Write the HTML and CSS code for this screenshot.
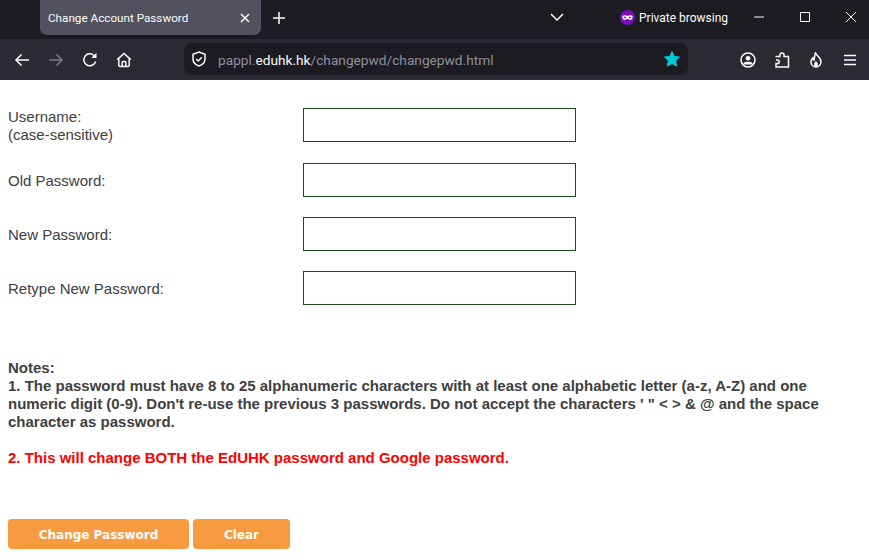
FILE: index.html
```html
<!DOCTYPE html>
<html lang="en">
<head>
  <meta charset="UTF-8">
  <title>Change Account Password</title>
  <link rel="stylesheet" href="styles.css">
</head>
<body>

<div class="tabbar">
  <div class="tab">
    <span class="tab-title">Change Account Password</span>
    <svg class="tab-close" width="10" height="10" viewBox="0 0 10 10"><path d="M1 1l8 8M9 1l-8 8" /></svg>
  </div>
  <svg class="new-tab" width="14" height="14" viewBox="0 0 14 14"><path d="M7 1v12M1 7h12" /></svg>
  <svg class="tab-list" width="14" height="8" viewBox="0 0 14 8"><path d="M1 1l6 6 6-6" /></svg>
  <div class="private">
    <svg width="15" height="15" viewBox="0 0 16 16"><circle cx="8" cy="8" r="8" /><path d="M2.600 6.400c1.600-1 3.600-.9 5.400.1 1.800-1 3.800-1.100 5.400-.1.300 2-.4 4-2.300 4.200-1.300.1-2.200-1.200-3.100-1.200s-1.800 1.300-3.100 1.200C3 10.400 2.300 8.400 2.600 6.400z" /><circle cx="5.400" cy="8" r="1.100" /><circle cx="10.600" cy="8" r="1.100" /></svg>
    <span>Private browsing</span>
  </div>
  <div class="win-buttons">
    <svg width="10" height="10" viewBox="0 0 10 10"><path d="M0 5h10" /></svg>
    <svg width="10" height="10" viewBox="0 0 10 10"><path d="M.5.500h9v9h-9z" /></svg>
    <svg width="10" height="10" viewBox="0 0 10 10"><path d="M0 0l10 10M10 0L0 10" /></svg>
  </div>
</div>

<div class="toolbar">
  <svg class="tool" width="16" height="16" viewBox="0 0 16 16"><path d="M15 8H2M7.500 2.500L2 8l5.500 5.500" /></svg>
  <svg class="tool tool-off" width="16" height="16" viewBox="0 0 16 16"><path d="M1 8h13M8.500 2.500L14 8l-5.500 5.500" /></svg>
  <svg class="tool" width="16" height="16" viewBox="0 0 16 16"><path d="M13.600 9.500A6 6 0 1 1 12 3.500" /><path class="solid" d="M14.500.8v5.200H9.300z" /></svg>
  <svg class="tool" width="16" height="16" viewBox="0 0 16 16"><path d="M1.200 7.600L8 1.500l6.800 6.100M2.800 6.500v6.800c0 .7.500 1.200 1.200 1.200h8c.7 0 1.200-.5 1.200-1.200V6.500M6.200 14.500V10.500c0-.5.400-.9.900-.9h1.800c.5 0 .9.400.9.900v4" /></svg>
  <div class="urlbar">
    <svg class="tool shield" width="16" height="16" viewBox="0 0 16 16"><path d="M8 1l6 2.200V8c0 3.400-2.600 5.800-6 7-3.400-1.200-6-3.600-6-7V3.200z" /><path d="M5.200 8l2 2 3.600-3.800" /></svg>
    <span class="url"><span class="url-dim">pappl.</span>eduhk.hk<span class="url-dim">/changepwd/changepwd.html</span></span>
    <svg class="star" width="16" height="16" viewBox="0 0 16 16"><path d="M8 .500l2.300 4.900 5.200.7-3.800 3.700.9 5.300L8 12.500l-4.600 2.600.9-5.300L.5 6.100l5.200-.7z" /></svg>
  </div>
  <div class="tools-right">
    <svg class="tool" width="16" height="16" viewBox="0 0 16 16"><circle cx="8" cy="8" r="7" /><circle class="solid" cx="8" cy="6.300" r="2.300" /><path class="solid" d="M3.500 11.200c1-1.100 2.600-1.500 4.500-1.500s3.500.4 4.500 1.500v1.300h-9z" /></svg>
    <svg class="tool" width="16" height="16" viewBox="0 0 16 16"><path d="M1.500 4.500H6V3a2 2 0 0 1 4 0v1.500h4.500V15H2v-3.500h1.500a1.800 1.800 0 0 0 0-3.600H2" /></svg>
    <svg class="tool" width="16" height="16" viewBox="0 0 16 16"><path d="M7.500.8c.5 2.500 5.500 4.500 5.500 9 0 3-2.200 5.200-5 5.200s-5-2.200-5-5c0-1.800.8-3 1.800-4 .1 1 .5 1.700 1.200 2.200C6.500 6 6.700 3 7.500.8z" /><path class="solid" d="M8 9c.3 1 2 1.800 2 3.400C10 13.500 9.100 14.500 8 14.500S6 13.500 6 12.400C6 11 7.700 10.200 8 9z" /></svg>
    <svg class="tool" width="16" height="16" viewBox="0 0 16 16"><path d="M2 3.500h12M2 8h12M2 12.500h12" /></svg>
  </div>
</div>

<form class="page">
  <div class="fields">
    <label class="field field-tall">
      <span>Username:<br>(case-sensitive)</span>
      <input type="text">
    </label>
    <label class="field">
      <span>Old Password:</span>
      <input type="password">
    </label>
    <label class="field">
      <span>New Password:</span>
      <input type="password">
    </label>
    <label class="field">
      <span>Retype New Password:</span>
      <input type="password">
    </label>
  </div>

  <div class="notes">
    <p>Notes:<br>1. The password must have 8 to 25 alphanumeric characters with at least one alphabetic letter (a-z, A-Z) and one numeric digit (0-9). Don't re-use the previous 3 passwords. Do not accept the characters ' " &lt; &gt; &amp; @ and the space character as password.</p>
    <p class="warning">2. This will change BOTH the EdUHK password and Google password.</p>
  </div>

  <div class="actions">
    <button type="button" class="btn btn-change">Change Password</button>
    <button type="reset" class="btn btn-clear">Clear</button>
  </div>
</form>

</body>
</html>
```

FILE: styles.css
```css
html, body { margin: 0; padding: 0; background: white; }
body { height: 560px; overflow: hidden; font-family: "Liberation Sans", Arial, sans-serif; font-size: 15px; color: #404040; }
svg path, svg circle { fill: none; stroke: #fbfbfe; stroke-width: 1.5; }
svg .solid { fill: #fbfbfe; stroke: none; }

.tabbar { display: flex; align-items: flex-start; height: 39px; background-color: #1c1b22; color: #fbfbfe; font-family: Roboto, "Noto Sans", sans-serif; font-size: 12px; white-space: nowrap; }
.tab { flex: none; display: flex; align-items: center; justify-content: space-between; box-sizing: border-box; width: 221px; height: 35px; margin-left: 40px; padding: 0 11px 0 8px; background-color: #52525e; border-radius: 0 0 7px 7px; }
.tab-title { font-size: 11.7px; }
.tab-close { flex: none; }
.new-tab { flex: none; margin: 11px 0 0 11px; }
.tab-list { flex: none; margin: 13px 0 0 264px; }
.private { flex: none; display: flex; align-items: center; gap: 4px; margin: 10px 0 0 56px; }
.private svg circle { fill: #7a0fb8; stroke: none; }
.private svg path { fill: #fff; stroke: none; }
.win-buttons { flex: none; display: flex; gap: 36px; margin: 12px 0 0 26px; }
.win-buttons path { stroke-width: 1; }

.toolbar { display: flex; align-items: center; height: 41px; background-color: #2b2a33; padding-left: 14px; }
.tool { flex: none; margin-right: 18px; }
.tool-off path { stroke: #7c7b84; }
.urlbar { flex: none; display: flex; align-items: center; box-sizing: border-box; width: 504px; height: 32px; margin: -1px 0 0 34px; padding: 0 8px 0 7px; background-color: #1c1b22; border-radius: 8px; font-family: Roboto, "Noto Sans", sans-serif; font-size: 13.7px; color: #fbfbfe; }
.shield { margin-right: 11px; }
.url { flex: 1; padding-top: 2px; }
.url-dim { color: #8f8f9d; }
.star path { fill: #00c8d7; stroke: #00c8d7; stroke-width: 1; stroke-linejoin: round; }
.tools-right { display: flex; margin-left: 52px; }

.page { padding: 28px 8px 0; }
.field { display: grid; grid-template-columns: 295px 273px; grid-template-rows: 34px; align-items: center; height: 54px; line-height: 18px; }
.field span { padding-top: 2px; }
.field-tall { height: 55px; }
.field-tall span { align-self: start; padding-top: 0; }
.field input { box-sizing: border-box; width: 273px; height: 34px; margin: 0; padding: 1px 2px; border: 1px solid #1f4a1f; background: white; border-radius: 0; outline: none; }
.notes { margin-top: 34px; font-weight: bold; line-height: 18px; }
.notes p { margin: 0 0 18px; }
.warning { color: #ff0000; }
.actions { display: flex; gap: 4px; margin-top: 52px; }
.btn { height: 30px; padding: 2px 0 0; border: 0; border-radius: 4px; background-color: #f89a40; color: white; font-family: "DejaVu Sans", Verdana, sans-serif; font-size: 12px; font-weight: bold; }
.btn-change { width: 181px; }
.btn-clear { width: 97px; }
```
